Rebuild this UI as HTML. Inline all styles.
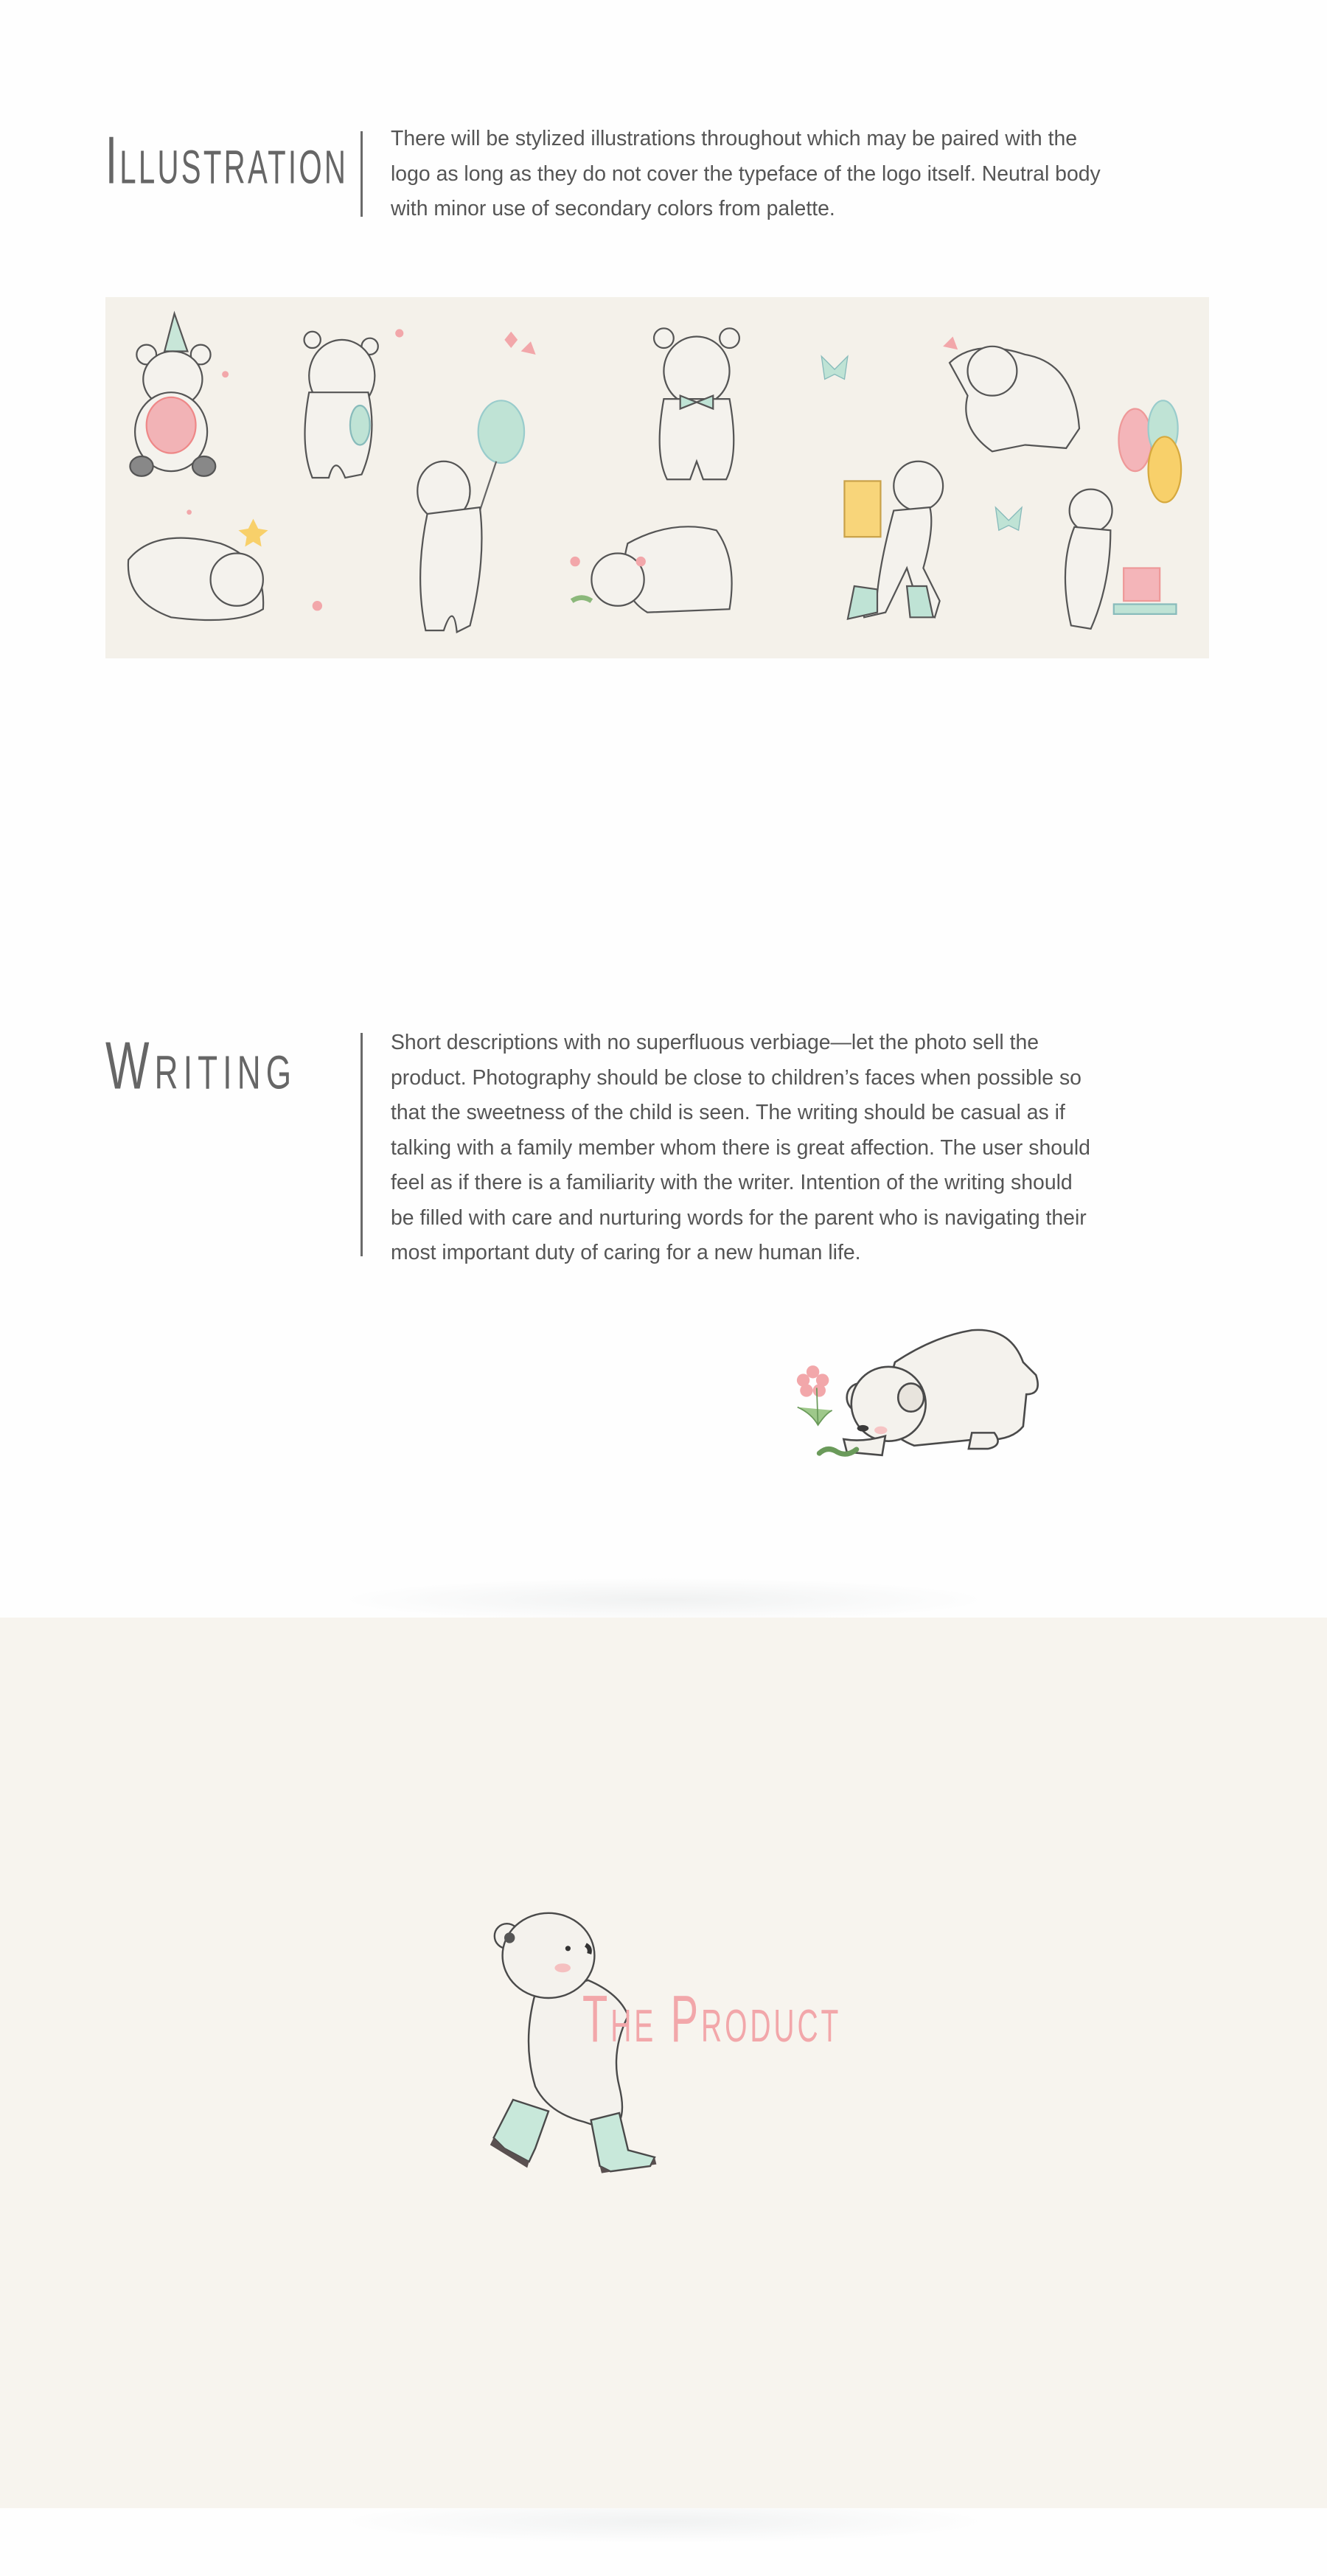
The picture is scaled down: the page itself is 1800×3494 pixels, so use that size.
<!DOCTYPE html>
<html><head><meta charset="utf-8"><style>
html,body{margin:0;padding:0;background:#fefefe;}
body{width:1800px;height:3494px;position:relative;overflow:hidden;font-family:"Liberation Sans",sans-serif;}
.h{position:absolute;font-family:"Liberation Sans Narrow","Liberation Sans",sans-serif;font-variant:small-caps;color:#666;font-size:70px;letter-spacing:4px;transform-origin:0 0;white-space:nowrap;line-height:1;}
.vl{position:absolute;left:489px;width:3px;background:#6a6a6a;}
.p{position:absolute;left:530px;color:#555;font-size:28.4px;line-height:47.5px;white-space:nowrap;}
.beige{position:absolute;left:0;top:2194px;width:1800px;height:1208px;background:#f7f4ee;}
.sh{position:absolute;left:450px;width:900px;height:60px;border-radius:50%;background:radial-gradient(ellipse at center,rgba(200,205,205,.25),rgba(255,255,255,0) 70%);}
</style></head><body>

<div class="sh" style="top:2140px"></div>
<div class="sh" style="top:3390px"></div>

<div class="h" style="left:143px;top:172px;transform:scale(0.82,1.3)">Illustration</div>
<div class="vl" style="top:178px;height:116px"></div>
<div class="p" style="top:165px">There will be stylized illustrations throughout which may be paired with the<br>logo as long as they do not cover the typeface of the logo itself. Neutral body<br>with minor use of secondary colors from palette.</div>

<svg style="position:absolute;left:143px;top:403px" width="1497" height="490" viewBox="0 0 672 220" preserveAspectRatio="none">
<rect width="672" height="220" fill="#f4f1ea"/>
<g fill="#f4f2ed" stroke="#555" stroke-width="1">
<polygon points="42,10 36,33 50,33" fill="#c8e6d8"/>
<circle cx="25" cy="35" r="6"/><circle cx="58" cy="35" r="6"/>
<ellipse cx="41" cy="50" rx="18" ry="17"/>
<ellipse cx="40" cy="82" rx="22" ry="24"/>
<ellipse cx="22" cy="103" rx="7" ry="6" fill="#888"/><ellipse cx="60" cy="103" rx="7" ry="6" fill="#888"/>
<ellipse cx="40" cy="78" rx="15" ry="17" fill="#f2b3b6" stroke="#e88"/>
<circle cx="126" cy="26" r="5"/><circle cx="161" cy="30" r="5"/>
<ellipse cx="144" cy="48" rx="20" ry="22"/>
<path d="M124 58 Q118 90 126 110 L136 110 Q140 95 146 110 L156 108 Q166 85 160 58 Z"/>
<ellipse cx="155" cy="78" rx="6" ry="12" fill="#bfe3d5" stroke="#8bb"/>
<ellipse cx="241" cy="82" rx="14" ry="19" fill="#bfe3d5" stroke="#9cc"/>
<path d="M238 100 L228 130" stroke="#666" fill="none"/>
<ellipse cx="206" cy="118" rx="16" ry="18"/>
<path d="M196 132 Q188 170 195 203 L206 203 Q212 185 214 204 L222 200 Q232 160 228 128 Z"/>
<circle cx="340" cy="25" r="6"/><circle cx="380" cy="25" r="6"/>
<ellipse cx="360" cy="45" rx="20" ry="21"/>
<path d="M340 62 Q334 95 342 111 L356 111 L360 100 L364 111 L378 111 Q386 95 380 62 Z"/>
<path d="M350 60 L360 64 L370 60 L370 68 L360 64 L350 68 Z" fill="#bfe3d5"/>
<path d="M514 40 Q530 25 560 35 Q590 40 593 80 L585 92 L560 90 L540 94 Q520 80 525 60 Z"/>
<circle cx="540" cy="45" r="15"/>
<circle cx="495" cy="115" r="15"/>
<path d="M480 130 Q472 160 470 180 L460 185 L462 195 L475 192 L488 165 L496 190 L505 195 L508 185 L498 165 Q505 140 502 128 Z"/>
<rect x="450" y="112" width="22" height="34" fill="#f8d57a" stroke="#c9a24a"/>
<path d="M456 176 L470 178 L470 192 L452 196 Z M488 176 L500 176 L504 195 L490 195 Z" fill="#bfe3d5"/>
<ellipse cx="627" cy="87" rx="10" ry="19" fill="#f4b5b9" stroke="#e99"/>
<ellipse cx="644" cy="80" rx="9" ry="17" fill="#bfe3d5" stroke="#9cc"/>
<ellipse cx="645" cy="105" rx="10" ry="20" fill="#f8d06a" stroke="#d6a93e"/>
<circle cx="600" cy="130" r="13"/>
<path d="M590 140 Q580 165 588 200 L600 202 Q612 175 612 142 Z"/>
<rect x="620" y="165" width="22" height="20" fill="#f4b5b9" stroke="#e99"/>
<rect x="614" y="187" width="38" height="6" fill="#bfe3d5" stroke="#8bb"/>
<path d="M14 160 Q30 140 70 150 Q98 160 96 190 Q80 200 40 195 Q12 185 14 160 Z"/>
<circle cx="80" cy="172" r="16"/>
<path d="M318 150 Q345 135 372 142 Q385 160 380 190 L330 192 Q310 180 318 150 Z"/>
<circle cx="312" cy="172" r="16"/>
</g>
<g fill="#f2a7aa"><circle cx="73" cy="47" r="2"/><circle cx="179" cy="22" r="2.5"/><circle cx="286" cy="161" r="3"/><circle cx="326" cy="161" r="3"/><circle cx="129" cy="188" r="3"/><circle cx="51" cy="131" r="1.5"/></g>
<path d="M243 26 l4 -5 4 5 -4 5z M253 33 l6-6 3 8z M510 30 l6-6 3 8z" fill="#f2a7aa"/>
<path d="M90 135 l3 6 6 1 -5 4 1 6 -5-3 -5 3 1-6 -5-4 6-1z" fill="#f8d06a"/>
<path d="M436 36 l8 8 8-8 -2 14 -6-3 -6 3z M542 128 l8 8 8-8 -2 14 -6-3 -6 3z" fill="#bfe3d5" stroke="#8bb" stroke-width=".6"/>
<path d="M284 185 q6 -4 12 0" stroke="#8bb87a" stroke-width="3" fill="none"/>
</svg>

<div class="h" style="left:143px;top:1400px;letter-spacing:8px;transform:scale(0.9,1.3)">Writing</div>
<div class="vl" style="top:1401px;height:303px"></div>
<div class="p" style="top:1391px">Short descriptions with no superfluous verbiage—let the photo sell the<br>product. Photography should be close to children’s faces when possible so<br>that the sweetness of the child is seen. The writing should be casual as if<br>talking with a family member whom there is great affection. The user should<br>feel as if there is a familiarity with the writer. Intention of the writing should<br>be filled with care and nurturing words for the parent who is navigating their<br>most important duty of caring for a new human life.</div>

<svg style="position:absolute;left:1040px;top:1775px" width="400" height="215" viewBox="0 0 460 240">
<g stroke="#4a4a4a" stroke-width="3" fill="#f4f2ed">
<path d="M200 80 Q260 40 320 30 Q380 25 400 80 L420 100 Q430 130 405 130 L400 180 Q380 205 330 200 L230 210 Q180 190 180 150 Z"/>
<ellipse cx="145" cy="135" rx="20" ry="22"/>
<circle cx="190" cy="145" r="58"/>
<ellipse cx="225" cy="135" rx="20" ry="22" fill="#e8e4dd"/>
<path d="M120 200 Q150 205 185 195 L180 225 L125 220 Z"/>
<path d="M320 190 L355 190 Q370 210 345 215 L315 215 Z"/>
</g>
<ellipse cx="150" cy="183" rx="9" ry="5" fill="#3a3a3a"/>
<ellipse cx="178" cy="186" rx="10" ry="6" fill="#f6c4c4"/>
<g fill="#f2a7aa"><circle cx="72" cy="95" r="10"/><circle cx="87" cy="108" r="10"/><circle cx="82" cy="124" r="10"/><circle cx="62" cy="124" r="10"/><circle cx="57" cy="108" r="10"/></g>
<circle cx="72" cy="112" r="5" fill="#fff"/>
<path d="M78 120 L80 178 M48 150 Q70 160 80 178 Q92 160 102 155" stroke="#6a9a5a" stroke-width="2" fill="#9ec88a"/>
<path d="M82 222 Q95 210 110 220 Q125 228 140 216" stroke="#6a9a5a" stroke-width="8" fill="none" stroke-linecap="round"/>
</svg>

<div class="beige"></div>

<svg style="position:absolute;left:660px;top:2590px" width="240" height="360" viewBox="0 0 200 300">
<g stroke="#4a4a4a" stroke-width="2" fill="#f4f2ed">
<path d="M55 95 Q40 150 55 200 Q70 230 110 240 L140 250 Q160 240 150 200 Q140 160 160 120 Q150 95 115 80 Z"/>
<circle cx="23" cy="30" r="14"/>
<ellipse cx="70" cy="52" rx="52" ry="48"/>
</g>
<circle cx="26" cy="32" r="6" fill="#555"/>
<circle cx="92" cy="44" r="3" fill="#333"/>
<path d="M112 40 q6 3 4 10" stroke="#333" stroke-width="5" fill="none"/>
<ellipse cx="86" cy="66" rx="9" ry="5" fill="#f5c0c0"/>
<g stroke="#4a4a4a" stroke-width="2" fill="#c8e8da">
<path d="M30 215 L70 228 L55 270 L48 285 L20 270 L8 258 Z"/>
<path d="M118 238 L150 230 L160 272 L190 280 L185 290 L140 296 L128 290 Z"/>
</g>
<path d="M8 258 L20 270 L48 285 L46 292 L4 266 Z M128 290 L140 296 L185 290 L190 280 L192 288 L130 298 Z" fill="#5a5050"/>
</svg>

<div class="h" style="left:790px;top:2694px;color:#f2a7aa;font-size:72px;letter-spacing:5px;transform:scale(0.78,1.25)">The Product</div>

</body></html>
